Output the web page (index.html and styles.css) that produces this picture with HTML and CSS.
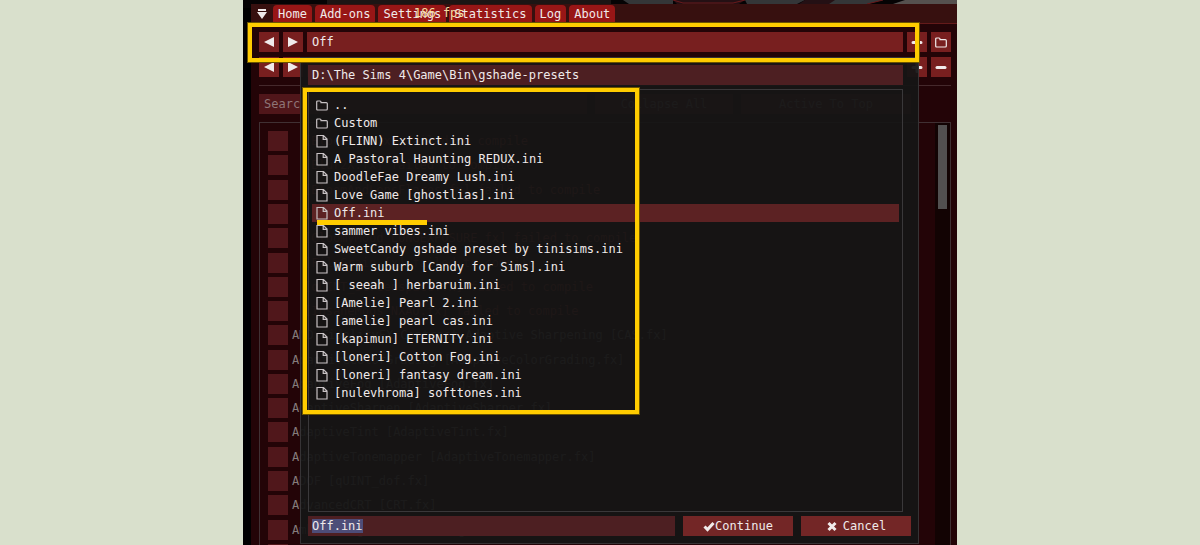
FILE: index.html
```html
<!DOCTYPE html>
<html lang="en">
    <head>
        <meta charset="UTF-8" />
        <meta name="viewport" content="width=device-width, initial-scale=1.0" />
        <title>GShade presets</title>
        <link rel="stylesheet" href="styles.css">
    </head>
    <body>
        <!-- shared icons -->
        <svg class="sprite" aria-hidden="true">
            <symbol id="left" viewBox="0 0 12 12"><path d="M11 1v10L1 6z" fill="currentColor" /></symbol>
            <symbol id="right" viewBox="0 0 12 12"><path d="M1 1v10l10-5z" fill="currentColor" /></symbol>
            <symbol id="plus" viewBox="0 0 12 12"><path d="M2 6.500h8M6 2.500v8" stroke="currentColor" stroke-width="3" stroke-linecap="round" /></symbol>
            <symbol id="minus" viewBox="0 0 12 12"><path d="M2 6.500h8" stroke="currentColor" stroke-width="3" stroke-linecap="round" /></symbol>
            <symbol id="folder" viewBox="0 0 12 12"><path d="M.7 10V3q0-1 1-1h2.300q1 0 1 1v.6h5.300q1 0 1 1V10q0 1-1 1H1.700q-1 0-1-1z" fill="none" stroke="currentColor" stroke-width="1.200" /></symbol>
            <symbol id="file" viewBox="0 0 12 14"><path d="M1 1.500h6.500L11 5v8H1zM7.200 1.500v3.800H11" fill="none" stroke="currentColor" stroke-width="1.200" /></symbol>
        </svg>

        <main class="screen">
            <svg class="game" viewBox="0 0 714 8" preserveAspectRatio="none" aria-hidden="true">
                <path d="M0 0h714v8H0z" fill="#050304" />
                <path d="M84 0h284v8H84z" fill="#1c1514" />
                <path d="M380 0h50v4h-44zM502 0h60l-8 4h-50zM590 0h50l-16 4h-46z" fill="#343638" />
                <path d="M430 0l4 4h62l6-4zM562 0l-6 4h30l6-4z" fill="#241014" />
                <path d="M662 0h52v4h-64z" fill="#55504e" />
                <path d="M430 0l10 3h50l12-3M640 0l-16 4" fill="none" stroke="#6b1a1c" />
            </svg>

            <section class="overlay">
                <nav class="tabs">
                    <button class="collapse" aria-label="Collapse window">
                        <svg viewBox="0 0 10 10"><path d="M1 0h8v2H1zM0 3h10L5 10z" fill="currentColor" /></svg>
                    </button>
                    <button class="tab">Home</button>
                    <button class="tab">Add-ons</button>
                    <button class="tab">Settings</button>
                    <button class="tab">Statistics</button>
                    <button class="tab">Log</button>
                    <button class="tab">About</button>
                </nav>
                <span class="fps">186 fps</span>

                <div class="panel">
                    <div class="row">
                        <button class="square" aria-label="Previous preset"><svg><use href="#left" /></svg></button>
                        <button class="square" aria-label="Next preset"><svg><use href="#right" /></svg></button>
                        <button class="preset">Off</button>
                        <button class="square" aria-label="Add preset"><svg><use href="#plus" /></svg></button>
                        <button class="square" aria-label="Open folder"><svg><use href="#folder" /></svg></button>
                    </div>
                    <div class="row">
                        <button class="square" aria-label="Previous"><svg><use href="#left" /></svg></button>
                        <button class="square" aria-label="Next"><svg><use href="#right" /></svg></button>
                        <button class="preset" aria-label="Preset group"></button>
                        <button class="square" aria-label="Add"><svg><use href="#plus" /></svg></button>
                        <button class="square" aria-label="Remove"><svg><use href="#minus" /></svg></button>
                    </div>
                    <hr class="line">
                    <div class="tools">
                        <input class="search" type="text" placeholder="Search" aria-label="Search">
                        <button class="tool">Collapse All</button>
                        <button class="tool wide">Active To Top</button>
                    </div>

                    <div class="effects">
                        <div class="effect-list">
                            <label class="failed"><input type="checkbox">[Bloom_AO.fx] failed to compile</label>
                            <label class="failed"><input type="checkbox">[Blur2X.fx] failed to compile</label>
                            <label class="failed"><input type="checkbox">[BloomAndLensFlares.fx] failed to compile</label>
                            <label class="failed"><input type="checkbox">[CROSSTALK_DIFFUSION.fx] failed to compile</label>
                            <label class="failed"><input type="checkbox">[GloomyMood_LONGEXPOSURE.fx] failed to compile</label>
                            <label class="failed"><input type="checkbox">[FilmGrain.fx] failed to compile</label>
                            <label class="failed"><input type="checkbox">[qUINT_Screenspace.fx] failed to compile</label>
                            <label class="failed"><input type="checkbox">[InsaneMods_NXAO.fx] failed to compile</label>
                            <label><input type="checkbox">AMD FidelityFX Contrast Adaptive Sharpening [CAS.fx]</label>
                            <label><input type="checkbox">AdaptiveColorGrading [AdaptiveColorGrading.fx]</label>
                            <label><input type="checkbox">AdaptiveFog [AdaptiveFog.fx]</label>
                            <label><input type="checkbox">AdaptiveSharpen [AdaptiveSharper.fx]</label>
                            <label><input type="checkbox">AdaptiveTint [AdaptiveTint.fx]</label>
                            <label><input type="checkbox">AdaptiveTonemapper [AdaptiveTonemapper.fx]</label>
                            <label><input type="checkbox">ADOF [qUINT_dof.fx]</label>
                            <label><input type="checkbox">AdvancedCRT [CRT.fx]</label>
                            <label><input type="checkbox">AmbientLight [AmbientLight.fx]</label>
                            <label><input type="checkbox" aria-label="Anamorphic"></label>
                        </div>
                        <div class="scrollbar"><div class="thumb"></div></div>
                    </div>
                </div>
            </section>

            <form class="dialog" onsubmit="return false">
                <input class="path" type="text" value="D:\The Sims 4\Game\Bin\gshade-presets" aria-label="Folder">
                <div class="browser">
                    <ul class="files">
                        <li><svg><use href="#folder" /></svg>..</li>
                        <li><svg><use href="#folder" /></svg>Custom</li>
                        <li><svg><use href="#file" /></svg>(FLINN) Extinct.ini</li>
                        <li><svg><use href="#file" /></svg>A Pastoral Haunting REDUX.ini</li>
                        <li><svg><use href="#file" /></svg>DoodleFae Dreamy Lush.ini</li>
                        <li><svg><use href="#file" /></svg>Love Game [ghostlias].ini</li>
                        <li class="selected"><svg><use href="#file" /></svg>Off.ini</li>
                        <li><svg><use href="#file" /></svg>sammer vibes.ini</li>
                        <li><svg><use href="#file" /></svg>SweetCandy gshade preset by tinisims.ini</li>
                        <li><svg><use href="#file" /></svg>Warm suburb [Candy for Sims].ini</li>
                        <li><svg><use href="#file" /></svg>[ seeah ] herbaruim.ini</li>
                        <li><svg><use href="#file" /></svg>[Amelie] Pearl 2.ini</li>
                        <li><svg><use href="#file" /></svg>[amelie] pearl cas.ini</li>
                        <li><svg><use href="#file" /></svg>[kapimun] ETERNITY.ini</li>
                        <li><svg><use href="#file" /></svg>[loneri] Cotton Fog.ini</li>
                        <li><svg><use href="#file" /></svg>[loneri] fantasy dream.ini</li>
                        <li><svg><use href="#file" /></svg>[nulevhroma] softtones.ini</li>
                    </ul>
                    <div class="mark mark-files"></div>
                </div>
                <div class="actions">
                    <input class="filename" id="filename" type="text" value="Off.ini" aria-label="File name">
                    <button class="action">
                        <svg viewBox="0 0 12 12"><path d="M1.500 6.500l3 3L10.500 3" fill="none" stroke="currentColor" stroke-width="3" /></svg>Continue
                    </button>
                    <button class="action spaced">
                        <svg viewBox="0 0 12 12"><path d="M2.500 3l7 7M9.500 3l-7 7" fill="none" stroke="currentColor" stroke-width="3" /></svg>Cancel
                    </button>
                </div>
            </form>

            <div class="mark mark-preset"></div>
        </main>

        <script>
            var filename = document.getElementById("filename");
            filename.focus();
            filename.select();
        </script>
    </body>
</html>
```

FILE: styles.css
```css
* {
    box-sizing: border-box;
}

body {
    margin: 0;
    background-color: #d9e0cc;
    font-family: "DejaVu Sans Mono", "Liberation Mono", monospace;
    font-size: 12px;
    line-height: 18px;
    color: #f0eaea;
}

button,
input {
    margin: 0;
    padding: 0;
    border: 0;
    border-radius: 0;
    outline: none;
    font: inherit;
    color: inherit;
}

.sprite {
    display: none;
}

.screen {
    position: relative;
    display: flex;
    flex-direction: column;
    width: 59.5%;
    height: 100vh;
    min-height: 500px;
    margin: 0 auto;
    background-color: #000;
    overflow: hidden;
}

.game {
    display: block;
    flex: none;
    width: 100%;
    height: 8px;
    margin-bottom: -4px;
}

.overlay {
    position: relative;
    flex: 1;
    min-height: 0;
    margin-left: 8px;
    background-color: #230407;
}

/* title bar */
.tabs {
    display: flex;
    gap: 3px;
    height: 20px;
    padding: 1px 6px 0;
    background-color: #37100f;
    border-bottom: 1px solid #641a1a;
}

.collapse {
    width: 13px;
    background: none;
}

.collapse svg {
    display: block;
    width: 10px;
    height: 10px;
}

.tab {
    padding: 0 5px;
    background-color: #981616;
    border-radius: 4px 4px 0 0;
}

.fps {
    position: absolute;
    top: 0;
    left: 163px;
    color: #f4dfa4;
}

/* preset rows */
.panel {
    display: flex;
    flex-direction: column;
    padding: 8px 6px 0 8px;
}

.row {
    display: flex;
    gap: 4px;
    margin-bottom: 5px;
}

.square,
.preset {
    height: 20px;
    background-color: #781f1f;
}

.square {
    display: flex;
    align-items: center;
    justify-content: center;
    width: 20px;
}

.square svg {
    width: 12px;
    height: 12px;
}

.preset {
    flex: 1;
    padding: 0 5px;
    text-align: left;
}

.line {
    width: 100%;
    height: 1px;
    margin: 3px 0 8px;
    border: 0;
    background-color: #45292c;
}

.tools {
    display: flex;
    gap: 8px;
    margin: 0 40px 8px 0;
    color: #8f7577;
}

.search {
    flex: 1;
    min-width: 0;
    height: 20px;
    padding: 0 5px;
    background-color: #50161a;
}

.search::placeholder {
    color: #8f7577;
}

.tool {
    width: 138px;
    background-color: #50161a;
}

.wide {
    width: 170px;
}

/* effect list behind the dialog */
.effects {
    display: flex;
    border: 1px solid #403033;
}

.effect-list {
    display: grid;
    grid-auto-rows: 1fr;
    flex: 1;
    height: 437px;
    margin-top: 6px;
    padding-left: 8px;
    color: #857c7c;
}

.effect-list label {
    display: flex;
    align-items: center;
    gap: 4px;
    white-space: nowrap;
}

.effect-list .failed {
    gap: 16px;
    color: #a03a30;
}

.effect-list input {
    appearance: none;
    width: 20px;
    height: 20px;
    background-color: #50171b;
}

.scrollbar {
    width: 15px;
    padding: 2px 3px;
    background-color: #120303;
}

.thumb {
    height: 84px;
    background-color: #525050;
}

/* file dialog */
.dialog {
    position: absolute;
    top: 57px;
    right: 38px;
    bottom: 1px;
    left: 57px;
    display: flex;
    flex-direction: column;
    gap: 4px;
    padding: 7px;
    background-color: rgba(21, 21, 21, 0.94);
    border: 1px solid #363335;
}

.path,
.filename {
    height: 20px;
    padding: 0 4px;
    background-color: #4d1f22;
}

.path {
    flex: none;
    margin-right: 8px;
}

.browser {
    position: relative;
    flex: 1;
    margin-right: 8px;
    padding: 6px 3px;
    border: 1px solid #3a383a;
}

.files {
    margin: 0;
    padding: 0;
    list-style: none;
}

.files li {
    display: flex;
    align-items: center;
    gap: 6px;
    height: 18px;
    padding-left: 4px;
    white-space: nowrap;
}

.files svg {
    width: 12px;
    height: 14px;
    color: #c8c2c4;
}

.files .selected {
    position: relative;
    background-color: #5c2223;
}

.files .selected::after {
    content: "";
    position: absolute;
    bottom: -3px;
    left: 5px;
    width: 110px;
    height: 5px;
    background-color: #ffcc00;
}

.actions {
    display: flex;
    gap: 8px;
}

.filename {
    flex: 1;
    min-width: 0;
    background-image: linear-gradient(#fff, #fff);
    background-repeat: no-repeat;
    background-position: 54px 3px;
    background-size: 1px 14px;
}

.filename::selection {
    background-color: #4d4d78;
    color: #f0eaea;
}

.action {
    display: flex;
    align-items: center;
    justify-content: center;
    width: 110px;
    height: 20px;
    background-color: #732626;
}

.action svg {
    width: 12px;
    height: 12px;
}

.spaced {
    gap: 5px;
}

/* yellow highlights */
.mark {
    position: absolute;
    border: 5px solid #ffcc00;
    outline: 1px solid #6b5400;
    outline-offset: -1px;
    pointer-events: none;
}

.mark-preset {
    top: 22px;
    right: 37px;
    left: 4px;
    height: 41px;
}

.mark-files {
    top: -3px;
    left: -7px;
    width: 338px;
    height: 328px;
}
```
